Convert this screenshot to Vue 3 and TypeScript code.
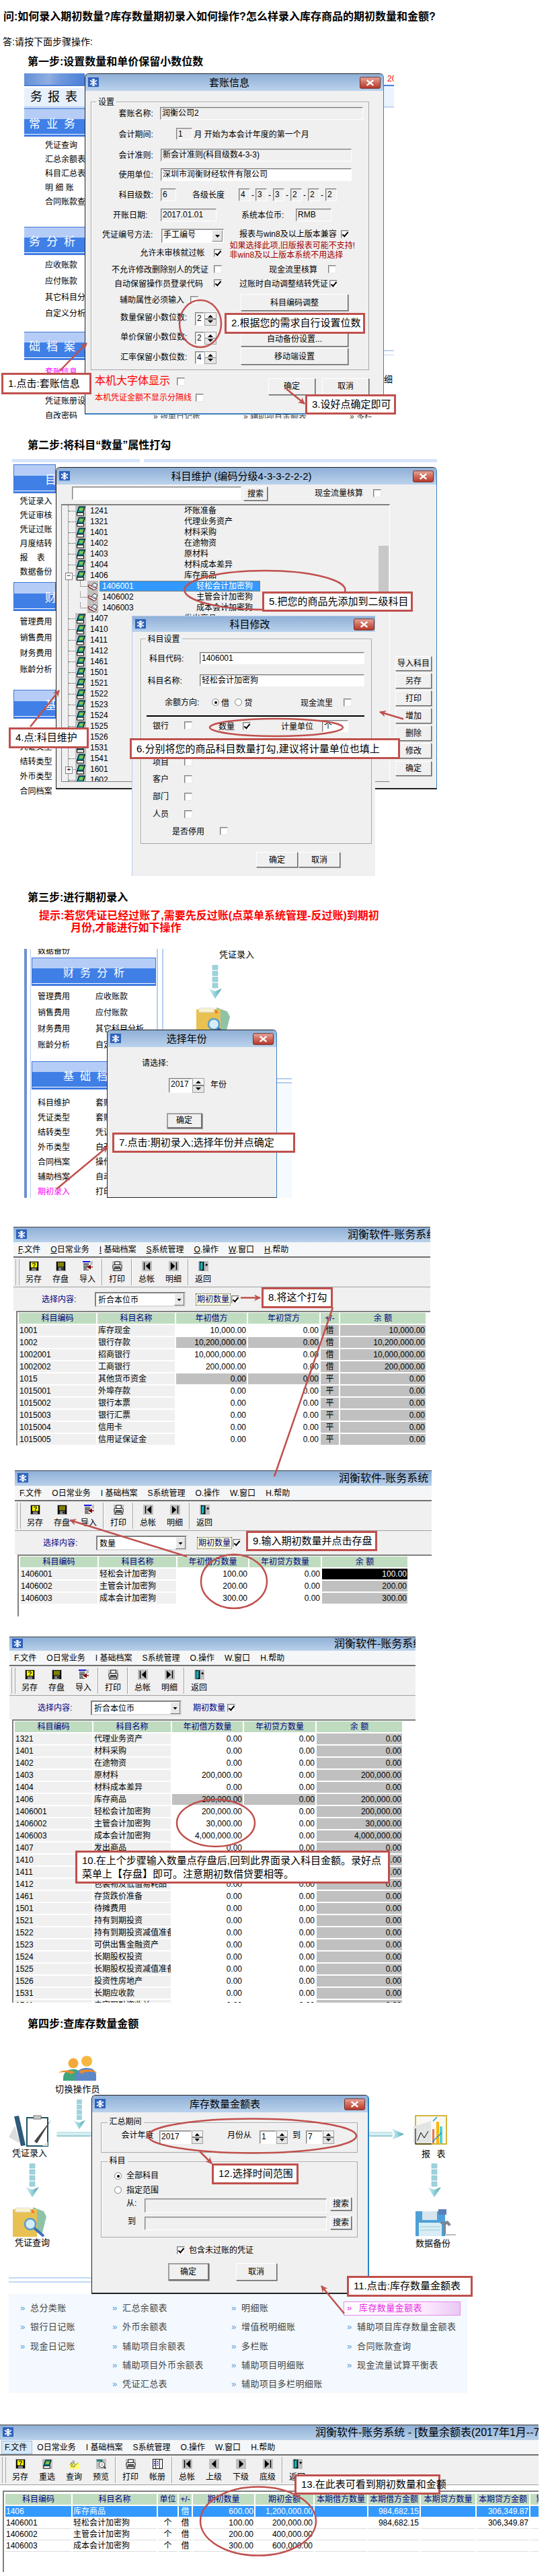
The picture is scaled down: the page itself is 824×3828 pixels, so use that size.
<template>
  <div class="page">
    <!-- shared icon sprite -->
    <svg class="defs" width="0" height="0">
      <defs>
        <linearGradient id="g-close" x1="0" y1="0" x2="0" y2="1">
          <stop offset="0" stop-color="#e8a79c" /><stop offset=".5" stop-color="#cf6a5c" /><stop offset="1" stop-color="#b8382a" />
        </linearGradient>
        <linearGradient id="g-teal" x1="0" y1="0" x2="1" y2="0">
          <stop offset="0" stop-color="#dff3f6" /><stop offset=".5" stop-color="#8fd0da" /><stop offset="1" stop-color="#4f9fae" />
        </linearGradient>
      </defs>
      <symbol id="snow" viewBox="0 0 16 16">
        <rect width="16" height="16" fill="#2d62bd" /><rect width="16" height="2" y="14" fill="#a8c4ea" />
        <path d="M8 2v11M3 4.500l10 6M13 4.500l-10 6M6 3l2 2 2-2M6 12l2-2 2 2" stroke="#fff" stroke-width="1.500" fill="none" />
      </symbol>
      <symbol id="close" viewBox="0 0 32 18">
        <rect x=".5" y=".5" width="31" height="17" rx="2" fill="url(#g-close)" stroke="#6b2a22" />
        <path d="M11 5l10 8M21 5l-10 8" stroke="#fff" stroke-width="2.600" />
      </symbol>
      <symbol id="saveas" viewBox="0 0 16 16">
        <rect width="16" height="16" fill="#c0c0c0" /><rect x="1" y="1" width="14" height="14" fill="#000" /><rect x="3" y="2" width="10" height="8" fill="#ff0" />
        <path d="M6 5c0-2.400 4-2.400 4 0 0 1.400-2 1.400-2 2.600M8 8.300v1.300" stroke="#000" stroke-width="1.200" fill="none" /><rect x="4" y="11" width="8" height="4" fill="#808080" />
      </symbol>
      <symbol id="save" viewBox="0 0 16 16">
        <rect width="16" height="16" fill="#c0c0c0" /><rect x="1" y="1" width="14" height="14" fill="#000" /><rect x="3" y="2" width="10" height="7" fill="#808000" />
        <rect x="4" y="10" width="8" height="5" fill="#808080" /><rect x="9" y="11" width="2" height="3" fill="#000" />
      </symbol>
      <symbol id="imp" viewBox="0 0 16 16">
        <rect width="12" height="16" fill="#fff" /><rect width="12" height="2" fill="#0000e0" />
        <path d="M1 4h9M1 6h9M1 8h8M1 10h6M1 12h6M1 14h9" stroke="#000" /><path d="M16 9.500h-4M12 7l-4 2.500 4 2.500z" stroke="#800000" fill="#800000" stroke-width="1.400" /><rect x="12" width="4" height="6" fill="#c0c0c0" />
      </symbol>
      <symbol id="print" viewBox="0 0 16 16">
        <rect width="16" height="16" fill="#c0c0c0" /><path d="M4 1h8v5H4z" fill="#fff" stroke="#000" /><rect x="1" y="6" width="14" height="6" rx="1.500" fill="#fff" stroke="#000" />
        <path d="M3 9h10M3 10.500h10" stroke="#000" /><path d="M3 12h10l1 3H2z" fill="#fff" stroke="#000" />
      </symbol>
      <symbol id="first" viewBox="0 0 16 16"><rect width="16" height="16" fill="#c0c0c0" /><rect x="3" y="2" width="1.500" height="12" /><path d="M13 1.500v13L6 8z" /></symbol>
      <symbol id="last" viewBox="0 0 16 16"><rect width="16" height="16" fill="#c0c0c0" /><rect x="11.500" y="2" width="1.500" height="12" /><path d="M3 1.500v13L10 8z" /></symbol>
      <symbol id="prev" viewBox="0 0 16 16"><rect width="16" height="16" fill="#c0c0c0" /><path d="M11 1.500v13L4 8z" /></symbol>
      <symbol id="next" viewBox="0 0 16 16"><rect width="16" height="16" fill="#c0c0c0" /><path d="M5 1.500v13L12 8z" /></symbol>
      <symbol id="exit" viewBox="0 0 16 16">
        <rect width="16" height="16" fill="#c0c0c0" /><path d="M2 1h7v14H2z" fill="#000" /><path d="M3 3l4-2v12l-4 2z" fill="#16b4bc" /><path d="M11 6h4M13 4v4" stroke="#000" stroke-width="1.300" />
      </symbol>
      <symbol id="book" viewBox="0 0 16 16">
        <rect width="16" height="16" fill="#c0c0c0" /><path d="M2 11l3-9h9l-3 9z" fill="#0f8a8a" stroke="#000" /><path d="M6 5h5M5.500 7h5" stroke="#ff0" /><path d="M2 11h10v4H2z" fill="#fff" stroke="#000" />
      </symbol>
      <symbol id="query" viewBox="0 0 16 16">
        <rect y="7" width="16" height="9" fill="#ffff70" /><path d="M3 13l6-10M6 14l8-8M1 9l6-7" stroke="#000" stroke-dasharray="1 1" /><circle cx="6" cy="9" r="3" fill="none" stroke="#000" stroke-dasharray="1 1" />
      </symbol>
      <symbol id="preview" viewBox="0 0 16 16">
        <rect width="16" height="16" fill="#c0c0c0" /><path d="M1 1h9v3H1z" fill="#0f7f7f" /><circle cx="9" cy="9" r="4.500" fill="#fff" stroke="#333" /><path d="M12 12l3 3" stroke="#333" stroke-width="2" /><path d="M7 8h4M7 10h4" stroke="#999" />
      </symbol>
      <symbol id="ledger" viewBox="0 0 16 16">
        <rect x=".5" y=".5" width="15" height="15" fill="#fff" stroke="#000" /><path d="M5 1v14M11 1v14" stroke="#000" /><path d="M2 4h2M2 7h2M2 10h2M7 4h2M7 7h2M7 10h2" stroke="#0000a0" stroke-width="1.400" />
      </symbol>
      <symbol id="tbook" viewBox="0 0 15 16">
        <path d="M2 11l3-9h9l-3 9z" fill="#0e8f8f" stroke="#000" /><path d="M6 5h5M5.500 7h5" stroke="#ff0" /><path d="M2 11h10v4H2z" fill="#fff" stroke="#000" />
      </symbol>
      <symbol id="topen" viewBox="0 0 16 16">
        <path d="M1 6l5 2 8 3-4 3-8-4z" fill="#fff" stroke="#7a1f1f" /><path d="M6 8l4-5 5 3-4 5z" fill="#fff" stroke="#333" /><path d="M8 7l3 2" stroke="#2040d0" /><path d="M1 8l8 5" stroke="#7a1f1f" />
      </symbol>
      <symbol id="dash" viewBox="0 0 20 50">
        <rect x="6" y="0" width="8" height="7" fill="#9ed3dc" stroke="#7fbcc8" stroke-width=".5" /><rect x="6" y="9" width="8" height="7" fill="#9ed3dc" stroke="#7fbcc8" stroke-width=".5" />
        <rect x="6" y="18" width="8" height="7" fill="#9ed3dc" stroke="#7fbcc8" stroke-width=".5" /><rect x="6" y="27" width="8" height="7" fill="#9ed3dc" stroke="#7fbcc8" stroke-width=".5" />
        <path d="M0 35l10 4 10-4-10 15z" fill="url(#g-teal)" />
      </symbol>
      <symbol id="users" viewBox="0 0 58 37">
        <circle cx="22" cy="11" r="7.500" fill="#f3a93a" /><circle cx="42" cy="8" r="8" fill="#f7b640" /><path d="M7 37c-1-13 6-17 15-17 6 0 9 2 11 5v12z" fill="#3fa57e" />
        <path d="M24 37c0-14 8-19 18-19 9 0 13 4 14 10v9z" fill="#5d87c7" /><path d="M0 25c6-4 12-4 19-2l-2-3 7 5-8 3 2-2c-6-2-12-2-18-1zM58 25c-6-4-12-6-22-3l2-3-8 5 8 4-2-3c8-2 14-1 22 0z" fill="#ee8a2a" />
      </symbol>
      <symbol id="clip" viewBox="0 0 65 48">
        <path d="M0 34l9-17 8 26z" fill="#ddd" /><path d="M8 3l7-1 10 44-7 1z" fill="#2f5a78" /><rect x="27" y="5" width="31" height="42" fill="#fff" stroke="#1e5563" stroke-width="2" />
        <rect x="37" y="2" width="11" height="5" fill="#ccc" stroke="#777" /><path d="M38 40l25-32-21 35z" fill="#444" /><path d="M50 47l8-6v6z" fill="#ddd" />
      </symbol>
      <symbol id="folder" viewBox="0 0 50 46">
        <path d="M30 2l16 6 4 8-6 24H30z" fill="#8fc3a8" /><path d="M0 5h36v41H0z" fill="#e9c152" /><path d="M4 3h22v6H4z" fill="#f8f2d0" stroke="#ddd" /><path d="M28 4l5 6-5 1z" fill="#f07820" />
        <circle cx="26" cy="27" r="8" fill="#d5edf8" stroke="#5a9dc8" stroke-width="2.500" /><path d="M32 33l14 12" stroke="#3a6fc0" stroke-width="4" />
      </symbol>
      <symbol id="chart" viewBox="0 0 60 46">
        <rect x="3" y="1" width="46" height="42" fill="#f8f8f4" stroke="#d6b53a" stroke-width="2" /><rect x="28" y="21" width="3" height="21" fill="#e97850" /><rect x="34" y="10" width="4" height="32" fill="#ffb400" />
        <rect x="39" y="17" width="4" height="25" fill="#4fd2d8" /><path d="M0 17l26-8v33H0z" fill="#e3e5e5" /><path d="M3 20v23h24M6 38l5-12 5 8 6-10" stroke="#000" stroke-width="1" fill="none" /><path d="M28 40l14-14M29 9l6-6" stroke="#1e90d0" stroke-width="1.400" />
      </symbol>
      <symbol id="disk" viewBox="0 0 60 40">
        <path d="M0 3h44v37H0z" fill="#4fa0d8" /><rect x="10" y="3" width="22" height="13" fill="#d7e5ef" /><rect x="5" y="20" width="34" height="20" fill="#d8edf6" /><path d="M7 26h30M7 31h30" stroke="#9cc" />
        <rect x="34" y="0" width="12" height="8" fill="#5a80b8" /><path d="M36 20l12-3 5 6-4 2-2-3-2 1v14h-4V24z" fill="#7a8896" /><path d="M44 38h16" stroke="#bbb" stroke-width="2" />
      </symbol>
      <marker id="tip" viewBox="0 0 10 10" refX="9" refY="5" markerWidth="4" markerHeight="4" orient="auto">
        <path d="M0 0l10 5-10 5 3-5z" fill="#c0504d" />
      </marker>
    </svg>

    <h1 class="q">问:如何录入期初数量?库存数量期初录入如何操作?怎么样录入库存商品的期初数量和金额?</h1>
    <p class="a">答:请按下面步骤操作:</p>

    <h2 class="step s-one">第一步:设置数量和单价保留小数位数</h2>
    <section class="shot s1">
      <div class="s1-side">
        <div class="s1-banner"></div>
        <div class="s1-rep">务报表</div>
        <div class="hdr h1a">常业务</div>
        <ul class="lst l1a"><li v-for="t in s1a" :key="t">{{ t }}</li></ul>
        <div class="hdr h1b">务分析</div>
        <ul class="lst l1b"><li v-for="t in s1b" :key="t">{{ t }}</li></ul>
        <div class="hdr h1c">础档案</div>
        <ul class="lst l1c"><li v-for="t in s1c" :key="t" :class="{ pink: t === '套账信息' }">{{ t }}</li></ul>
      </div>
      <div class="s1-right">
        <span class="s1-20">20</span>
        <div class="s1-box"></div>
        <div class="s1-lines"></div>
        <span class="s1-xi">细</span>
      </div>
      <div class="s1-foot"><span>» 银单日记账</span><span>» 辅助项目余额表</span><span>» 多栏</span></div>
      <div class="win d1">
        <div class="bar"><svg class="ic"><use href="#snow" /></svg><span class="ti">套账信息</span><svg class="x"><use href="#close" /></svg></div>
        <div v-for="(c, i) in dlg1" :key="i" :class="c.cls" :style="at(c, 127, 110)">{{ c.text }}</div>
      </div>
    </section>

    <h2 class="step s-two">第二步:将科目“数量”属性打勾</h2>
    <section class="shot s2">
      <div class="s2-top"></div>
      <div class="s2-side">
        <div class="hdr h2a">目</div>
        <ul class="lst l2a"><li v-for="t in s2a" :key="t">{{ t }}</li></ul>
        <div class="hdr h2b">财</div>
        <ul class="lst l2b"><li v-for="t in s2b" :key="t">{{ t }}</li></ul>
        <div class="hdr h2c">基</div>
        <ul class="lst l2c"><li v-for="t in s2c" :key="t" :class="{ pink: t === '科目维护' }">{{ t }}</li></ul>
      </div>
      <div class="win d2">
        <div class="bar"><svg class="ic"><use href="#snow" /></svg><span class="ti">科目维护 (编码分级4-3-3-2-2-2)</span><svg class="x"><use href="#close" /></svg></div>
        <div v-for="(c, i) in dlg2" :key="i" :class="c.cls" :style="at(c, 84, 695)">{{ c.text }}</div>
        <div class="tree">
          <div class="scroll"><i class="thumb"></i></div>
          <div v-for="r in tree" :key="r.code" class="trow" :class="{ sub: r.sub, sel: r.sel }">
            <span v-if="r.exp" class="exp">{{ r.exp }}</span>
            <svg class="tic"><use :href="r.sub ? '#topen' : '#tbook'" /></svg>
            <span class="tc"><span class="tcode">{{ r.code }}</span><span class="tname">{{ r.name }}</span></span>
          </div>
        </div>
      </div>
      <div class="win d2b">
        <div class="bar"><svg class="ic"><use href="#snow" /></svg><span class="ti">科目修改</span><svg class="x"><use href="#close" /></svg></div>
        <div v-for="(c, i) in dlg2b" :key="i" :class="c.cls" :style="at(c, 196, 916)">{{ c.text }}</div>
      </div>
    </section>

    <h2 class="step s-three">第三步:进行期初录入</h2>
    <p class="tip">提示:若您凭证已经过账了,需要先反过账(点菜单系统管理-反过账)到期初<br />月份,才能进行如下操作</p>
    <section class="shot s3">
      <div class="s3-fill"></div>
      <div class="s3-side">
        <div class="s3-in">
          <div class="s3-clip">数据备份</div>
          <div class="hdr h3a">财务分析</div>
          <ul class="lst two l3a"><li v-for="t in s3a" :key="t">{{ t }}</li></ul>
          <div class="hdr h3b">基础档案</div>
          <ul class="lst two l3b"><li v-for="t in s3b" :key="t" :class="{ pink: t === '期初录入' }">{{ t }}</li></ul>
        </div>
      </div>
      <span class="fl f3t">凭证录入</span>
      <svg class="fl f3d"><use href="#dash" /></svg>
      <svg class="fl f3f"><use href="#folder" /></svg>
      <div class="s3-lines"></div>
      <div class="win d3">
        <div class="bar"><svg class="ic"><use href="#snow" /></svg><span class="ti">选择年份</span><svg class="x"><use href="#close" /></svg></div>
        <div v-for="(c, i) in dlg3" :key="i" :class="c.cls" :style="at(c, 160, 1531)">{{ c.text }}</div>
      </div>
    </section>

    <template v-for="b in blocks" :key="b.id">
      <template v-if="b.id === 'stock'">
        <h2 class="step s-four">第四步:查库存数量金额</h2>
        <section class="shot s7">
          <svg class="fl f7u"><use href="#users" /></svg>
          <span class="fl f7ut">切换操作员</span>
          <svg class="fl f7d1"><use href="#dash" /></svg>
          <div class="fl f7bar"></div>
          <svg class="fl f7c"><use href="#clip" /></svg>
          <span class="fl f7ct">凭证录入</span>
          <svg class="fl f7d2"><use href="#dash" /></svg>
          <svg class="fl f7f"><use href="#folder" /></svg>
          <span class="fl f7ft">凭证查询</span>
          <div class="fl f7bar2"></div>
          <svg class="fl f7tip" viewBox="0 0 18 17"><path d="M0 0l18 8.500L0 17l4-8.500z" fill="url(#g-teal)" /></svg>
          <svg class="fl f7r"><use href="#chart" /></svg>
          <span class="fl f7rt">报 表</span>
          <svg class="fl f7d3"><use href="#dash" /></svg>
          <svg class="fl f7k"><use href="#disk" /></svg>
          <span class="fl f7kt">数据备份</span>
          <div class="fl f7lines"></div>
          <div class="links">
            <div v-for="(l, i) in links" :key="i" class="lk" :class="{ hot: l === '库存数量金额表' }"><template v-if="l"><span class="raq">»</span>{{ l }}</template></div>
          </div>
          <div class="win d7">
            <div class="bar"><svg class="ic"><use href="#snow" /></svg><span class="ti">库存数量金额表</span><svg class="x"><use href="#close" /></svg></div>
            <div v-for="(c, i) in dlg7" :key="i" :class="c.cls" :style="at(c, 136, 3113)">{{ c.text }}</div>
          </div>
        </section>
      </template>

      <!-- the main ledger window comes back four times -->
      <section v-else class="led" :class="b.id">
        <div class="lbar"><svg class="ic"><use href="#snow" /></svg><span class="lti">{{ b.title }}</span></div>
        <div class="menu">
          <span v-for="(m, i) in menu" :key="m" class="mi" :class="{ u: b.underline, on: b.hot && i === 0 }"><b>{{ m[0] }}</b>{{ m.slice(1) }}</span>
        </div>
        <div class="rule"></div>
        <div class="tools">
          <i class="grip"></i>
          <template v-for="(t, i) in b.tools" :key="i">
            <i v-if="!t" class="sepa"></i>
            <div v-else class="tool"><svg class="tico"><use :href="'#' + t.i" /></svg><span>{{ t.l }}</span></div>
          </template>
        </div>
        <div v-if="b.combo" class="filter">
          <span class="fl-l">选择内容:</span>
          <div class="fl-c"><span>{{ b.combo }}</span><i class="cbi"></i></div>
          <span class="fl-q" :class="{ dot: b.dotted }">期初数量</span>
          <i class="ck on fl-k"></i>
        </div>
        <div class="wrap">
          <div class="grid" :style="{ gridTemplateColumns: b.cols }">
            <div v-for="h in b.head" :key="h" class="hc">{{ h }}</div>
            <template v-for="(r, ri) in b.rows" :key="ri">
              <div v-for="(v, ci) in r.cells" :key="ci" class="cell" :class="cellClass(b, r, ci)">{{ v }}</div>
            </template>
          </div>
        </div>
      </section>
    </template>

    <!-- red call-outs drawn over the screenshots -->
    <svg class="marks" viewBox="0 0 824 3828">
      <ellipse v-for="(e, i) in rings" :key="i" :cx="e[0]" :cy="e[1]" :rx="e[2]" :ry="e[3]" />
      <line v-for="(a, i) in arrows" :key="i" :x1="a[0]" :y1="a[1]" :x2="a[2]" :y2="a[3]" marker-end="url(#tip)" />
      <line x1="495" y1="1943" x2="408" y2="2194" />
    </svg>
    <div v-for="n in notes" :key="n.lines[0]" class="note" :style="noteBox(n)">
      <div><div v-for="l in n.lines" :key="l">{{ l }}</div></div>
    </div>
  </div>
</template>

<script setup lang="ts">
interface Ctl {
  cls: string
  x: number
  y: number
  w?: number
  h?: number
  text?: string
}

// control helpers, all coordinates are page pixels read off the reference
const lb = (x: number, cy: number, text: string, cls = ""): Ctl => ({ cls: `lb ${cls}`, x, y: cy - 9, h: 18, text })
const fd = (x: number, y: number, x2: number, y2: number, text = "", cls = ""): Ctl => ({ cls: `fd ${cls}`, x, y, w: x2 - x, h: y2 - y, text })
const bt = (x: number, y: number, x2: number, y2: number, text: string, cls = ""): Ctl => ({ cls: `bt ${cls}`, x, y, w: x2 - x, h: y2 - y, text })
const ck = (x: number, y: number, on = false): Ctl => ({ cls: on ? "ck on" : "ck", x, y, w: 12, h: 12 })
const rd = (x: number, y: number, on = false): Ctl => ({ cls: on ? "rd on" : "rd", x, y, w: 11, h: 11 })
const sp = (x: number, y: number, x2: number, y2: number): Ctl => ({ cls: "sp", x, y, w: x2 - x, h: y2 - y })
const gp = (x: number, y: number, x2: number, y2: number): Ctl => ({ cls: "gp", x, y, w: x2 - x, h: y2 - y })

const at = (c: Ctl, ox: number, oy: number) => ({
  left: `${c.x - ox}px`,
  top: `${c.y - oy}px`,
  width: c.w ? `${c.w}px` : undefined,
  height: c.h ? `${c.h}px` : undefined,
})

const s1a = ["凭证查询", "汇总余额表", "科目汇总表", "明 细 账", "合同账款查"]
const s1b = ["应收账款", "应付账款", "其它科目分", "自定义分析"]
const s1c = ["套账信息", "账簿设置", "凭证账册设", "自改密码"]
const s2a = ["凭证录入", "凭证审核", "凭证过账", "月度结转", "报    表", "数据备份"]
const s2b = ["管理费用", "销售费用", "财务费用", "账龄分析"]
const s2c = ["科目维护", "凭证类型", "结转类型", "外币类型", "合同档案"]
const s3a = ["管理费用", "应收账款", "销售费用", "应付账款", "财务费用", "其它科目分析", "账龄分析", "自定义分析"]
const s3b = ["科目维护", "套账信息", "凭证类型", "套账备份", "结转类型", "凭证账册", "外币类型", "自改密码", "合同档案", "操作员管理", "辅助档案", "自动备份设置", "期初录入", "打印机设置"]

const dlg1: Ctl[] = [
  gp(135, 151, 549, 550),
  lb(143, 152, "设置", "gl"),
  lb(176.5, 169, "套账名称:"),
  fd(238, 159, 540, 178, "润衡公司2", "dis"),
  lb(176.5, 200, "会计期间:"),
  fd(262, 190, 286, 208, "1", "dis"),
  lb(288.5, 200, "月 开始为本会计年度的第一个月"),
  lb(176.5, 231, "会计准则:"),
  fd(239, 221, 523, 240, "新会计准则(科目级数4-3-3)", "dis"),
  lb(176.5, 260, "使用单位:"),
  fd(239, 250, 523, 269, "深圳市润衡财经软件有限公司"),
  lb(176.5, 290, "科目级数:"),
  fd(239, 280, 262, 299, "6", "dis"),
  lb(286, 290, "各级长度"),
  fd(355, 280, 372, 299, "4", "dis"),
  lb(374, 290, "-"),
  fd(380, 280, 397, 299, "3", "dis"),
  lb(399, 290, "-"),
  fd(406, 280, 423, 299, "3", "dis"),
  lb(425, 290, "-"),
  fd(432, 280, 449, 299, "2", "dis"),
  lb(451, 290, "-"),
  fd(458, 280, 475, 299, "2", "dis"),
  lb(477, 290, "-"),
  fd(484, 280, 501, 299, "2", "dis"),
  lb(168, 320, "开账日期:"),
  fd(239, 310, 322, 329, "2017.01.01", "dis"),
  lb(359, 320, "系统本位币:"),
  fd(440, 310, 493, 329, "RMB", "dis"),
  lb(152, 349, "凭证编号方法:"),
  fd(240, 340, 333, 361, "手工编号"),
  { cls: "cb", x: 315, y: 342, w: 16, h: 17 },
  lb(356, 348, "报表与win8及以上版本兼容"),
  ck(507, 342, true),
  lb(341.5, 365, "如果选择此项,旧版报表可能不支持!", "dr"),
  lb(341.5, 379, "非win8及以上版本系统不用选择", "dr"),
  lb(208.5, 376, "允许未审核就过帐"),
  ck(318, 370, true),
  lb(166, 401, "不允许修改删除别人的凭证"),
  ck(318, 394),
  lb(400, 401, "现金流里核算"),
  ck(488, 394),
  lb(170, 422, "自动保留操作员登录代码"),
  ck(318, 415, true),
  lb(356, 422, "过账时自动调整结转凭证"),
  ck(490, 416, true),
  lb(178, 446, "辅助属性必须输入"),
  ck(283, 440),
  bt(358, 437, 518, 462, "科目编码调整"),
  bt(358, 492, 518, 515, "自动备份设置..."),
  bt(358, 517, 518, 542, "移动端设置"),
  lb(179, 472, "数量保留小数位数:"),
  fd(290, 464, 304, 484, "2"),
  sp(304, 464, 322, 484),
  lb(179, 501, "单价保留小数位数:"),
  fd(290, 493, 304, 512, "2"),
  sp(304, 493, 322, 512),
  lb(179, 531, "汇率保留小数位数:"),
  fd(290, 522, 304, 541, "4"),
  sp(304, 522, 322, 541),
  lb(141, 566, "本机大字体显示", "big"),
  ck(263, 561),
  lb(141, 590.5, "本机凭证金额不显示分隔线", "red"),
  ck(291, 585),
  bt(399, 562, 469, 586.5, "确定"),
  bt(479, 562, 549, 586.5, "取消"),
]

const dlg2: Ctl[] = [
  fd(107, 723, 359, 743),
  bt(362, 723, 398, 744, "搜索"),
  lb(468, 733, "现金流量核算"),
  ck(555, 727),
  bt(588, 975, 642, 997, "导入科目"),
  bt(588, 1000, 642, 1023, "另存"),
  bt(588, 1026, 642, 1049, "打印"),
  bt(588, 1052, 642, 1075, "增加"),
  bt(588, 1078, 642, 1101, "删除"),
  bt(588, 1104, 642, 1127, "修改"),
  bt(588, 1131, 642, 1153, "确定"),
]

const dlg2b: Ctl[] = [
  gp(208, 949, 552, 1254),
  lb(215.5, 950, "科目设置", "gl"),
  lb(221, 979, "科目代码:"),
  fd(296, 969, 541, 987, "1406001"),
  lb(218.5, 1012, "科目名称:"),
  fd(296, 1002, 541, 1020, "轻松会计加密狗"),
  lb(244, 1044, "余额方向:"),
  rd(314, 1038, true),
  lb(328, 1045, "借"),
  rd(348, 1038),
  lb(362.5, 1045, "贷"),
  lb(446, 1045, "现金流里"),
  ck(510, 1038),
  { cls: "blk", x: 217, y: 1063, w: 324, h: 2 },
  lb(226, 1079, "银行"),
  ck(273, 1072),
  lb(324, 1080, "数量"),
  ck(360, 1073, true),
  lb(417, 1080, "计量单位"),
  fd(478, 1070, 517, 1088, "个"),
  lb(226, 1133, "项目"),
  ck(273, 1126),
  lb(226, 1158, "客户"),
  ck(273, 1152),
  lb(226, 1184, "部门"),
  ck(273, 1178),
  lb(226, 1210, "人员"),
  ck(273, 1204),
  lb(255, 1236, "是否停用"),
  ck(326, 1229),
  bt(380, 1266, 442, 1289, "确定"),
  bt(443, 1266, 505, 1289, "取消"),
]

const dlg3: Ctl[] = [
  lb(211, 1579.5, "请选择:"),
  fd(251, 1602, 286, 1624, "2017"),
  sp(286, 1602, 304, 1624),
  lb(313, 1612, "年份"),
  bt(247.5, 1653.5, 300.5, 1677, "确定", "def"),
]

const dlg7: Ctl[] = [
  gp(149, 3153, 531, 3198),
  lb(158.5, 3152, "汇总期间", "gl"),
  lb(179.5, 3172, "会计年度"),
  fd(236, 3165, 284, 3185, "2017"),
  sp(284, 3165, 300.5, 3185),
  lb(337, 3172, "月份从"),
  fd(385, 3165, 410, 3185, "1"),
  sp(410, 3165, 427, 3185),
  lb(434, 3172, "到"),
  fd(454, 3165, 479, 3185, "7"),
  sp(479, 3165, 496, 3185),
  gp(149, 3211, 531, 3324),
  lb(158.5, 3210, "科目", "gl"),
  rd(169, 3227, true),
  lb(187, 3232, "全部科目"),
  rd(169, 3248),
  lb(187, 3254, "指定范围"),
  lb(187, 3273, "从:"),
  fd(214, 3266, 484.5, 3287, "", "dis"),
  bt(490, 3264, 522, 3284, "搜索"),
  lb(189, 3299.5, "到"),
  fd(214, 3293, 484.5, 3313, "", "dis"),
  bt(490, 3292, 522, 3312, "搜索"),
  ck(262, 3337, true),
  lb(280, 3342.5, "包含未过账的凭证"),
  bt(248.5, 3361.5, 309.5, 3388, "确定", "def"),
  bt(349.5, 3361.5, 410.5, 3388, "取消"),
]

interface TreeRow {
  code: string
  name: string
  sub?: boolean
  sel?: boolean
  exp?: string
}

const treeTop: [string, string][] = [
  ["1241", "坏账准备"],
  ["1321", "代理业务资产"],
  ["1401", "材料采购"],
  ["1402", "在途物资"],
  ["1403", "原材料"],
  ["1404", "材料成本差异"],
]
const treeEnd = ["1410", "1411", "1412", "1461", "1501", "1521", "1522", "1523", "1524", "1525", "1526", "1531", "1541", "1601", "1602"]
const tree: TreeRow[] = [
  ...treeTop.map(([code, name]) => ({ code, name })),
  { code: "1406", name: "库存商品", exp: "−" },
  { code: "1406001", name: "轻松会计加密狗", sub: true, sel: true },
  { code: "1406002", name: "主管会计加密狗", sub: true },
  { code: "1406003", name: "成本会计加密狗", sub: true },
  { code: "1407", name: "发出商品" },
  ...treeEnd.map((code) => ({ code, name: "", exp: code === "1601" ? "+" : undefined })),
]

const menu = ["F.文件", "O日常业务", "I 基础档案", "S系统管理", "O.操作", "W.窗口", "H.帮助"]

const SEP = null
const toolsA = [
  { i: "saveas", l: "另存" }, { i: "save", l: "存盘" }, { i: "imp", l: "导入" }, SEP,
  { i: "print", l: "打印" }, SEP, { i: "first", l: "总帐" }, { i: "last", l: "明细" }, SEP, { i: "exit", l: "返回" },
]
const toolsB = [
  { i: "saveas", l: "另存" }, { i: "book", l: "重选" }, { i: "query", l: "查询" }, { i: "preview", l: "预览" }, SEP,
  { i: "print", l: "打印" }, { i: "ledger", l: "帐册" }, SEP, { i: "first", l: "总帐" }, { i: "prev", l: "上级" },
  { i: "next", l: "下级" }, { i: "last", l: "底级" }, SEP, { i: "exit", l: "返回" },
]

interface LedRow {
  cells: string[]
  gray?: boolean
  sel?: boolean
  black?: boolean
}

const num = (code: string, name: string, d: string, c = "0.00", sign = "平", gray = false): LedRow => ({
  cells: [code, name, d, c, sign, d],
  gray,
})
const num5 = (code: string, name: string, d = "0.00", gray = false, black = false): LedRow => ({
  cells: [code, name, d, "0.00", d],
  gray,
  black,
})

const rowsMoney: LedRow[] = [
  num("1001", "库存现金", "10,000.00", "0.00", "借"),
  num("1002", "银行存款", "10,200,000.00", "0.00", "借", true),
  num("1002001", "招商银行", "10,000,000.00", "0.00", "借"),
  num("1002002", "工商银行", "200,000.00", "0.00", "借"),
  num("1015", "其他货币资金", "0.00", "0.00", "平", true),
  num("1015001", "外埠存款", "0.00"),
  num("1015002", "银行本票", "0.00"),
  num("1015003", "银行汇票", "0.00"),
  num("1015004", "信用卡", "0.00"),
  num("1015005", "信用证保证金", "0.00"),
]

const rowsQty: LedRow[] = [
  num5("1406001", "轻松会计加密狗", "100.00", false, true),
  num5("1406002", "主管会计加密狗", "200.00"),
  num5("1406003", "成本会计加密狗", "300.00"),
]

const rowsStock: LedRow[] = [
  num5("1321", "代理业务资产"),
  num5("1401", "材料采购"),
  num5("1402", "在途物资"),
  num5("1403", "原材料", "200,000.00"),
  num5("1404", "材料成本差异"),
  num5("1406", "库存商品", "200,000.00", true),
  num5("1406001", "轻松会计加密狗", "200,000.00"),
  num5("1406002", "主管会计加密狗", "30,000.00"),
  num5("1406003", "成本会计加密狗", "4,000,000.00"),
  num5("1407", "发出商品"),
  num5("1410", "商品进销差价"),
  num5("1411", "委托加工物资"),
  num5("1412", "包装物及低值易耗品"),
  num5("1461", "存货跌价准备"),
  num5("1501", "待摊费用"),
  num5("1521", "持有到期投资"),
  num5("1522", "持有到期投资减值准备"),
  num5("1523", "可供出售金融资产"),
  num5("1524", "长期股权投资"),
  num5("1525", "长期股权投资减值准备"),
  num5("1526", "投资性房地产"),
  num5("1531", "长期应收款"),
  num5("1541", "未实现融资收益"),
]

const rowsFinal: LedRow[] = [
  { cells: ["1406", "库存商品", "", "借", "600.00", "1,200,000.00", "", "984,682.15", "", "306,349.87", ""], sel: true },
  { cells: ["1406001", "轻松会计加密狗", "个", "借", "100.00", "200,000.00", "", "984,682.15", "", "306,349.87", ""] },
  { cells: ["1406002", "主管会计加密狗", "个", "借", "200.00", "400,000.00", "", "", "", "", ""] },
  { cells: ["1406003", "成本会计加密狗", "个", "借", "300.00", "600,000.00", "", "", "", "", ""] },
]

const cols5 = "115px 115px 105px 106px 127px"
const head5 = ["科目编码", "科目名称", "年初借方数量", "年初贷方数量", "余 额"]

interface Ledger {
  id: string
  title?: string
  underline?: boolean
  hot?: boolean
  dotted?: boolean
  combo?: string
  tools?: ({ i: string; l: string } | null)[]
  cols?: string
  head?: string[]
  rows?: LedRow[]
}

const blocks: Ledger[] = [
  {
    id: "l4", title: "润衡软件-账务系统", underline: true, dotted: true, combo: "折合本位币", tools: toolsA,
    cols: "115px 115px 105px 106px 27px 127px", head: ["科目编码", "科目名称", "年初借方", "年初贷方", "+/-", "余 额"], rows: rowsMoney,
  },
  { id: "l5", title: "润衡软件-账务系统 -", dotted: true, combo: "数量", tools: toolsA, cols: cols5, head: head5, rows: rowsQty },
  { id: "l6", title: "润衡软件-账务系统", combo: "折合本位币", tools: toolsA, cols: cols5, head: head5, rows: rowsStock },
  { id: "stock" },
  {
    id: "l8", title: "润衡软件-账务系统 - [数量余额表(2017年1月--7月", hot: true, tools: toolsB,
    cols: "98px 125px 29px 19px 91px 86px 78px 76px 81px 78px 40px",
    head: ["科目编码", "科目名称", "单位", "+/-", "期初数量", "期初金额", "本期借方数量", "本期借方金额", "本期贷方数量", "本期贷方金额", "累计"],
    rows: rowsFinal,
  },
]

const cellClass = (b: Ledger, r: LedRow, ci: number) => {
  const n = r.cells.length
  if (b.id === "l8") {
    return { tx8: ci < 2, mid: ci === 2 || ci === 3, sel: r.sel, plain: true }
  }
  const last = ci === n - 1
  return {
    tx: ci < 2,
    mid: n === 6 && ci === 4,
    g: ci >= 2 && (last || r.gray || (n === 6 && ci === 4)),
    inv: r.black && last,
  }
}

const links = [
  "总分类账", "汇总余额表", "明细账", "库存数量金额表",
  "银行日记账", "外币余额表", "增值税明细账", "辅助项目库存数量金额表",
  "现金日记账", "辅助项目余额表", "多栏账", "合同账款查询",
  "", "辅助项目外币余额表", "辅助项目明细账", "现金流量试算平衡表",
  "", "凭证汇总表", "辅助项目多栏明细账", "",
]

const rings = [
  [298, 481, 31, 35],
  [394, 877, 119.5, 29],
  [411, 1081, 99, 13],
  [348, 2350, 49, 40],
  [321, 2709, 58, 35],
  [375, 3174, 155, 25.5],
  [384, 3746.5, 86, 51],
]

const arrows = [
  [89, 551, 129, 510],
  [426, 578, 453, 600],
  [45, 1080, 88, 1026],
  [600, 1068.5, 565, 1058],
  [84, 1767, 160, 1704],
  [358, 1928.5, 387, 1928.5],
  [278, 2313, 104, 2259],
  [297, 3197, 315, 3215],
  [512, 3438, 478, 3397],
]

const notes = [
  { x: 2, y: 554, x2: 136, y2: 586, lines: ["1.点击:套账信息"] },
  { x: 334, y: 464.5, x2: 543, y2: 495.5, lines: ["2.根据您的需求自行设置位数"] },
  { x: 454, y: 586, x2: 589, y2: 616, lines: ["3.设好点确定即可"] },
  { x: 13, y: 1081, x2: 132, y2: 1111.5, lines: ["4.点:科目维护"] },
  { x: 390, y: 879, x2: 614, y2: 909, lines: ["5.把您的商品先添加到二级科目"] },
  { x: 193, y: 1097, x2: 595, y2: 1128, lines: ["6.分别将您的商品科目数量打勾,建议将计量单位也填上"] },
  { x: 167, y: 1682.5, x2: 439, y2: 1713, lines: ["7.点击:期初录入;选择年份并点确定"] },
  { x: 389, y: 1912.5, x2: 495, y2: 1943.5, lines: ["8.将这个打勾"] },
  { x: 366, y: 2274.5, x2: 561, y2: 2305, lines: ["9.输入期初数量并点击存盘"] },
  { x: 112, y: 2750, x2: 580, y2: 2799, lines: ["10.在上个步骤输入数量点存盘后,回到此界面录入科目金额。录好点", "菜单上【存盘】即可。注意期初数借贷要相等。"] },
  { x: 516, y: 3382, x2: 703, y2: 3412.5, lines: ["11.点击:库存数量金额表"] },
  { x: 315, y: 3215, x2: 443.5, y2: 3245.5, lines: ["12.选择时间范围"] },
  { x: 438, y: 3677, x2: 655, y2: 3706.5, lines: ["13.在此表可看到期初数量和金额"] },
]

const noteBox = (n: { x: number; y: number; x2: number; y2: number }) => ({
  left: `${n.x}px`,
  top: `${n.y}px`,
  width: `${n.x2 - n.x}px`,
  height: `${n.y2 - n.y}px`,
})
</script>

<style scoped>
.page {
  position: relative;
  display: flow-root;
  width: 824px;
  height: 3828px;
  overflow: hidden;
  background: #fff;
  color: #000;
  font: 12px/16px "Liberation Sans", "Noto Sans CJK SC", sans-serif;
}
.defs {
  position: absolute;
}
.q {
  margin: 15px 0 0 5px;
  font-size: 16px;
  line-height: 20px;
  font-weight: 700;
}
.a {
  margin: 17px 0 0 4px;
  font-size: 14px;
  line-height: 20px;
}
.step {
  margin: 0 0 0 41px;
  font-size: 16px;
  line-height: 20px;
  font-weight: 700;
}
.s-one { margin-top: 10px; }
.s-two { margin-top: 30px; }
.s-three { margin-top: 22px; }
.s-four { margin-top: 22px; }
.tip {
  margin: 8px 0 0 58px;
  padding-left: 47px;
  text-indent: -47px;
  color: #f00;
  font-size: 16px;
  line-height: 18px;
  font-weight: 700;
  white-space: nowrap;
}

.shot {
  position: relative;
  overflow: hidden;
}
.s1 { margin: 7px 0 0 36px; width: 550px; height: 513px; }
.s2 { margin: 10px 0 0 18px; width: 632px; height: 620px; }
.s3 { margin: 22px 0 0 36px; width: 398px; height: 370px; }
.s7 { margin: 36px 0 0 13px; width: 682px; height: 502px; }

/* left navigation of the accounting program */
.hdr {
  display: flex;
  align-items: center;
  box-sizing: border-box;
  height: 42px;
  padding-top: 5px;
  border: 1px solid #3f74d6;
  background: linear-gradient(#b5cdf6 0 38%, #3f7fe6 38% 92%, #fff 92% 95%, #3f7fe6 95%);
  color: #fff;
  font-size: 17px;
  letter-spacing: 9px;
  white-space: nowrap;
  overflow: hidden;
}
.lst {
  margin: 0;
  padding: 0;
  list-style: none;
  white-space: pre;
}
.pink { color: #f0f; }
.s1-side { width: 90px; }
.s1-banner {
  height: 17px;
  background: linear-gradient(100deg, #5f8fd8, #90aee0 40%, #6f97dc 60%, #4a7fd8);
  border-bottom: 2px solid #4a7fd8;
}
.s1-rep {
  height: 27px;
  margin-top: 3px;
  padding-left: 9px;
  border-bottom: 3px solid #c0d4f4;
  background: #e8f0fb;
  font-size: 18px;
  line-height: 27px;
  letter-spacing: 8px;
}
.s1-side .hdr { padding-left: 7px; border-width: 1px 0; }
.l1a { padding: 2.500px 0 0 31px; }
.l1a li { height: 21px; line-height: 21px; }
.h1b { margin-top: 26px; }
.l1b { padding: 3px 0 0 31px; }
.l1b li { height: 24.300px; line-height: 24px; }
.h1c { margin-top: 14px; }
.l1c { padding: 8px 0 0 31px; }
.l1c li { height: 21.700px; line-height: 21px; }
.s1-right {
  position: absolute;
  left: 535px;
  top: 0;
  display: flex;
  flex-direction: column;
  width: 15px;
  height: 513px;
  color: #000;
}
.s1-20 {
  height: 17px;
  padding-left: 5px;
  color: #f00;
  overflow: hidden;
}
.s1-box {
  height: 30px;
  border-top: 2px solid #4a7fd8;
  border-bottom: 2px solid #c0d4f4;
  background: #eaf3fe;
}
.s1-lines {
  height: 5px;
  margin-top: 360px;
  border-top: 2px solid #c0d4f4;
  border-bottom: 1px solid #c0d4f4;
}
.s1-xi { margin-top: 28px; font-size: 13px; }
.s1-foot {
  position: absolute;
  left: 192px;
  top: 502px;
  display: flex;
  gap: 64px;
  color: #444;
}

.win {
  position: absolute;
  box-sizing: border-box;
  border: 1px solid #222;
  border-right-color: #3a7fc0;
  border-radius: 6px 6px 0 0;
  background: #f0f0f0;
  overflow: hidden;
}
.bar {
  display: flex;
  align-items: center;
  height: 25px;
  padding: 0 4px;
  background: linear-gradient(#8fafd6, #bad2ec);
}
.ic {
  flex: none;
  width: 16px;
  height: 16px;
}
.ti {
  flex: 1;
  font-size: 15px;
  text-align: center;
}
.x {
  flex: none;
  width: 31px;
  height: 18px;
}
.d1 { left: 90px; top: 0; width: 445px; height: 507px; border-bottom: 2px solid #3a7fc0; }
.d2 { left: 65px; top: 12px; width: 567px; height: 479px; border-bottom: 2px solid #222; }
.d2b { left: 178px; top: 233px; width: 362px; height: 387px; border-radius: 0; border-color: #b5cdf0; border-width: 1px 0 0 1px; }
.d2b .bar { height: 23px; padding-right: 1px; }
.d3 { left: 123px; top: 120px; width: 252.500px; height: 250px; }
.d7 { left: 123px; top: 59px; width: 413px; height: 296px; border-bottom: 2px solid #222; border-right: 2px solid #2a7fc8; }

/* free placed form controls */
.lb {
  position: absolute;
  line-height: 18px;
  white-space: nowrap;
}
.gl { background: #f0f0f0; padding: 0 3px; }
.dr { color: #a00000; }
.big { color: #f00; font-size: 16px; }
.red { color: #f00; }
.fd {
  position: absolute;
  box-sizing: border-box;
  padding-left: 2px;
  border: 1px solid;
  border-color: #808080 #fff #fff #808080;
  box-shadow: inset 1px 1px 0 #c8c8c8;
  background: #fff;
  line-height: 17px;
  white-space: nowrap;
  overflow: hidden;
}
.dis { background: #f0f0f0; }
.bt {
  position: absolute;
  display: flex;
  align-items: center;
  justify-content: center;
  box-sizing: border-box;
  border: 1px solid;
  border-color: #fff #696969 #696969 #fff;
  box-shadow: 1px 1px 0 #a0a0a0;
  background: #f0f0f0;
  white-space: nowrap;
}
.def {
  border: 2px solid #707070;
  border-top-color: #a0a0a0;
  border-left-color: #a0a0a0;
}
.ck {
  position: absolute;
  display: block;
  box-sizing: border-box;
  border: 1px solid;
  border-color: #808080 #e8e8e8 #e8e8e8 #808080;
  box-shadow: inset 1px 1px 0 #c8c8c8;
  background: #fff;
}
.ck.on::after {
  content: "";
  position: absolute;
  left: 3px;
  top: 0;
  width: 3px;
  height: 7px;
  border: solid #000;
  border-width: 0 2px 2px 0;
  transform: rotate(40deg);
}
.rd {
  position: absolute;
  box-sizing: border-box;
  border: 1px solid #808080;
  border-radius: 50%;
  background: #fff;
}
.rd.on::after {
  content: "";
  position: absolute;
  left: 2.500px;
  top: 2.500px;
  width: 4px;
  height: 4px;
  border-radius: 50%;
  background: #000;
}
.gp {
  position: absolute;
  box-sizing: border-box;
  border: 1px solid #a8a8a8;
  box-shadow: inset 1px 1px 0 #fff;
}
.blk {
  position: absolute;
  background: #000;
}
.sp {
  position: absolute;
  box-sizing: border-box;
  border: 1px solid #a0a0a0;
  background: linear-gradient(#f4f4f4 0 47%, #808080 47% 53%, #e4e4e4 53%);
}
.sp::before,
.sp::after {
  content: "";
  position: absolute;
  left: 25%;
  width: 50%;
  height: 4px;
  background: #000;
}
.sp::before { top: 3px; clip-path: polygon(50% 0, 100% 100%, 0 100%); }
.sp::after { bottom: 3px; clip-path: polygon(0 0, 100% 0, 50% 100%); }
.cb {
  position: absolute;
  box-sizing: border-box;
  border: 1px solid;
  border-color: #fff #808080 #808080 #fff;
  background: #e4e4e4;
}
.cb::after {
  content: "";
  position: absolute;
  left: 4px;
  top: 6px;
  width: 7px;
  height: 4px;
  background: #000;
  clip-path: polygon(0 0, 100% 0, 50% 100%);
}

/* screenshot two */
.s2-top {
  height: 5px;
  background: linear-gradient(90deg, #d6e5fa 0 30%, #fff 30% 31%, #d6e5fa 31%);
}
.s2-side { width: 65px; padding-left: 2px; box-sizing: border-box; margin-top: 3px; }
.s2-side .hdr { height: 43px; padding-left: 46px; }
.s2-side .lst { padding-left: 9.500px; white-space: pre; }
.l2a { padding-top: 1.500px; }
.l2a li { height: 21px; line-height: 21px; }
.h2b { margin-top: 4px; }
.l2b { padding-top: 5.600px; }
.l2b li { height: 23.700px; line-height: 23px; }
.h2c { margin-top: 17px; }
.l2c { padding-top: 9px; }
.l2c li { height: 22px; line-height: 22px; }
.tree {
  position: absolute;
  left: 7px;
  top: 54px;
  box-sizing: border-box;
  width: 489px;
  height: 413px;
  border: solid #808080;
  border-width: 2px 1px 1px 1px;
  border-right-color: #fff;
  overflow: hidden;
}
.tree::before {
  content: "";
  position: absolute;
  left: 9px;
  top: 0;
  height: 100%;
  border-left: 1px dotted #555;
}
.scroll {
  position: absolute;
  right: 1px;
  top: 0;
  z-index: 1;
  width: 16px;
  height: 100%;
  background: #f0f0f0;
}
.thumb {
  position: absolute;
  top: 60px;
  left: 1px;
  width: 15px;
  height: 70px;
  background: #c8c8c8;
}
.trow {
  position: relative;
  display: flex;
  align-items: center;
  height: 16px;
  padding-left: 20px;
  white-space: nowrap;
}
.trow::before {
  content: "";
  position: absolute;
  left: 10px;
  top: 8px;
  width: 10px;
  border-top: 1px dotted #555;
}
.trow.sub { padding-left: 38px; }
.trow.sub::before { left: 27px; width: 11px; }
.trow.sub::after {
  content: "";
  position: absolute;
  left: 27px;
  top: 0;
  height: 9px;
  border-left: 1px dotted #555;
}
.exp {
  position: absolute;
  left: 5px;
  top: 4px;
  z-index: 1;
  width: 9px;
  height: 9px;
  border: 1px solid #808080;
  background: #fff;
  font-size: 10px;
  line-height: 8px;
  text-align: center;
}
.tic {
  flex: none;
  width: 16px;
  height: 16px;
  background: #c0c0c0;
}
.tc {
  display: flex;
  align-items: center;
  height: 16px;
  margin-left: 4px;
  padding-left: 2px;
}
.tcode { width: 140px; }
.sel .tc {
  width: 235px;
  margin-left: 2px;
  padding-left: 4px;
  background: #3399ff;
  color: #fff;
  outline: 1px dotted #c86a00;
  outline-offset: -1px;
}

/* screenshot three */
.s3-fill {
  position: absolute;
  left: 207px;
  top: 200px;
  width: 191px;
  height: 170px;
  background: #f5fafe;
}
.s3-lines {
  position: absolute;
  left: 375px;
  top: 192px;
  width: 23px;
  height: 4px;
  border: solid #b5cdf0;
  border-width: 2px 0;
}
.s3-side {
  box-sizing: border-box;
  width: 207px;
  height: 370px;
  padding-left: 5px;
  border-left: 4px solid #6f8fd0;
  border-right: 2px solid #b5cdf0;
}
.s3-in {
  box-sizing: border-box;
  width: 190px;
  height: 100%;
  padding-left: 1px;
  border-left: 1px solid #b5cdf0;
  border-right: 2px solid #b5cdf0;
}
.s3-clip {
  height: 12.600px;
  padding-left: 9px;
  line-height: 6px;
  overflow: hidden;
}
.s3-side .hdr {
  width: 185px;
  padding-left: 46px;
  font-size: 16px;
  letter-spacing: 9px;
}
.two {
  display: grid;
  grid-template-columns: 86px 90px;
  padding-left: 9px;
}
.l3a { padding-top: 4px; }
.l3a li { height: 24px; line-height: 24px; }
.h3b { margin-top: 12px; }
.l3b { padding-top: 9px; }
.l3b li { height: 22px; line-height: 22px; }
.fl { position: absolute; }
.f3t { left: 290px; top: 0; font-size: 13px; line-height: 18px; }
.f3d { left: 274px; top: 24px; width: 20px; height: 50px; }
.f3f { left: 256px; top: 85px; width: 50px; height: 46px; }

/* ledger windows */
.led {
  position: relative;
  display: flex;
  flex-direction: column;
  overflow: hidden;
}
.l4 { margin: 43px 0 0 20px; width: 620px; height: 325px; }
.l5 { margin: 37px 0 0 22px; width: 620px; height: 217px; }
.l6 { margin: 30px 0 0 14px; width: 604px; height: 544px; }
.l8 { margin: 47px 0 0 0; width: 801px; height: 219px; }
.lbar {
  flex: none;
  display: flex;
  align-items: center;
  height: 23px;
  padding-left: 4px;
  border-top: 1px solid #404040;
  box-sizing: border-box;
  background: linear-gradient(#8fafd6, #b9d1ea);
  white-space: nowrap;
}
.l6 .lbar { height: 21px; }
.lti {
  position: absolute;
  left: 497px;
  font-size: 16px;
  line-height: 22px;
}
.l5 .lti { left: 482px; }
.l6 .lti { left: 483px; }
.l8 .lti { left: 469px; }
.menu {
  flex: none;
  display: flex;
  gap: 15px;
  align-items: center;
  height: 21px;
  padding-left: 7px;
  background: #f5f6f7;
  white-space: nowrap;
}
.mi { position: relative; isolation: isolate; }
.mi b { font-weight: 400; }
.u b { text-decoration: underline; }
.mi.on::before {
  content: "";
  position: absolute;
  left: -5px;
  right: -8px;
  top: -2px;
  bottom: -2px;
  z-index: -1;
  border: 1px solid #9cc0e4;
  background: #d6e8f8;
}
.rule {
  flex: none;
  height: 2px;
  background: #707070;
}
.tools {
  flex: none;
  display: flex;
  height: 43px;
  border-bottom: 1px solid #a0a0a0;
  background: #f0f0f0;
}
.grip {
  flex: none;
  width: 6px;
  margin: 2px 1px 2px 3px;
  border: solid #a8a8a8;
  border-width: 0 1px;
  box-sizing: border-box;
}
.sepa {
  flex: none;
  width: 2px;
  margin: 2px 1px;
  border-left: 1px solid #a0a0a0;
  border-right: 1px solid #fff;
  box-sizing: border-box;
}
.tool {
  flex: none;
  display: flex;
  flex-direction: column;
  align-items: center;
  width: 40px;
  padding-top: 5px;
  box-sizing: border-box;
}
.tico {
  width: 15px;
  height: 15px;
}
.tool span { margin-top: 4px; line-height: 16px; }
.filter {
  flex: none;
  display: flex;
  align-items: center;
  height: 35px;
  background: #f0f0f0;
  white-space: nowrap;
}
.fl-l {
  width: 79px;
  margin-left: 42px;
  color: #000080;
}
.fl-c {
  position: relative;
  box-sizing: border-box;
  width: 135px;
  height: 22px;
  padding-left: 3px;
  border: 2px solid #808080;
  border-right-color: #ddd;
  border-bottom-color: #ddd;
  background: #fff;
  line-height: 20px;
}
.cbi {
  position: absolute;
  right: 0;
  top: 0;
  width: 15px;
  height: 100%;
  box-sizing: border-box;
  border: 1px solid;
  border-color: #fff #707070 #707070 #fff;
  background: #e8e8e8;
}
.cbi::after {
  content: "";
  position: absolute;
  left: 3px;
  top: 7px;
  width: 7px;
  height: 4px;
  background: #000;
  clip-path: polygon(0 0, 100% 0, 50% 100%);
}
.fl-q {
  margin-left: 15px;
  padding: 0 1px;
  color: #000080;
  border: 1px solid transparent;
}
.fl-q.dot { border: 1px dotted #444; background: #ffffd8; }
.fl-k {
  position: relative;
  margin-left: 1px;
  width: 12px;
  height: 12px;
}
.wrap {
  flex: 1;
  margin-left: 4px;
  padding: 1px 0 0 2px;
  border: solid #808080;
  border-width: 2px 0 0 2px;
  background: #fff;
}
.l8 .wrap { margin: 8px 0 0 4px; padding: 3px 0 0 2px; }
.grid {
  display: grid;
  gap: 2px;
  width: max-content;
  white-space: nowrap;
}
.l8 .grid { row-gap: 1px; }
.hc {
  height: 16px;
  background: #c0dcc0;
  color: #000080;
  line-height: 17px;
  text-align: center;
}
.l8 .hc { margin-bottom: 1px; overflow: hidden; }
.cell {
  height: 16px;
  padding-right: 1px;
  line-height: 16px;
  text-align: right;
  overflow: hidden;
}
.cell.tx {
  padding: 0 0 0 1px;
  background: #f0f0f0;
  text-align: left;
}
.cell.tx8 {
  padding: 0 0 0 1px;
  text-align: left;
}
.cell.mid {
  padding: 0;
  text-align: center;
}
.cell.g { background: #c0c0c0; }
.cell.inv { background: #000; color: #fff; }
.cell.plain { background: #fff; box-shadow: 0 1px 0 #ddd; }
.cell.sel { background: #3399ff; color: #fff; box-shadow: none; }

/* screenshot seven */
.f7u { left: 74px; top: 1px; width: 58px; height: 37px; }
.f7ut { left: 69px; top: 42px; font-size: 13px; line-height: 18px; letter-spacing: .4px; }
.f7d1 { left: 95px; top: 66px; width: 20px; height: 44px; }
.f7bar { left: 71px; top: 114px; width: 52px; height: 7px; background: linear-gradient(#b5dee5, #e4f5f7, #7fbcc8); border-radius: 2px; }
.f7c { left: 0; top: 88px; width: 65px; height: 48px; }
.f7ct { left: 5px; top: 137px; font-size: 13px; line-height: 18px; }
.f7d2 { left: 25px; top: 161px; width: 20px; height: 50px; }
.f7f { left: 6px; top: 224px; width: 50px; height: 46px; }
.f7ft { left: 9px; top: 270px; font-size: 13px; line-height: 18px; }
.f7bar2 { left: 536px; top: 114px; width: 35px; height: 7px; background: linear-gradient(#b5dee5, #e4f5f7, #7fbcc8); border-radius: 2px; }
.f7tip { left: 570px; top: 109px; width: 18px; height: 17px; }
.f7r { left: 602px; top: 89px; width: 60px; height: 46px; }
.f7rt { left: 614px; top: 138px; font-size: 13px; line-height: 18px; letter-spacing: 3px; }
.f7d3 { left: 623px; top: 161px; width: 20px; height: 50px; }
.f7k { left: 605px; top: 229px; width: 60px; height: 40px; }
.f7kt { left: 605px; top: 271px; font-size: 13px; line-height: 18px; }
.f7lines { left: 0; top: 330px; width: 125px; height: 4px; border: solid #c0d8f4; border-width: 2px 0; }
.links {
  position: absolute;
  left: 0;
  top: 355px;
  display: grid;
  grid-template-columns: 137px 177px 172px 179px;
  grid-auto-rows: 28.300px;
  box-sizing: border-box;
  width: 682px;
  height: 147px;
  padding: 7px 0 0 17px;
  background: #f3f9fe;
  color: #444;
  font-size: 13px;
  letter-spacing: .4px;
  white-space: nowrap;
}
.lk { display: flex; align-items: center; }
.raq { width: 15px; color: #5a9bd5; flex: none; }
.lk.hot {
  align-self: center;
  box-sizing: border-box;
  width: 174px;
  height: 21px;
  margin-left: -5px;
  padding-left: 4px;
  border: 1px solid #e98ae9;
  background: linear-gradient(90deg, #fff, #fde9fd 70%, #e8c8f4);
  color: #e62ee6;
}
.lk.hot .raq { width: 18px; color: #e62ee6; }

/* overlay marks */
.marks {
  position: absolute;
  left: 0;
  top: 0;
  z-index: 5;
  width: 824px;
  height: 3828px;
  pointer-events: none;
}
.marks ellipse,
.marks line {
  fill: none;
  stroke: #c0504d;
  stroke-width: 2.500;
}
.note {
  position: absolute;
  z-index: 6;
  display: flex;
  align-items: center;
  box-sizing: border-box;
  padding-left: 7px;
  border: 3px solid #c0504d;
  background: #fff;
  font-size: 15px;
  line-height: 20px;
  white-space: nowrap;
}
</style>

<style>
body {
  background: #fff;
}
</style>
